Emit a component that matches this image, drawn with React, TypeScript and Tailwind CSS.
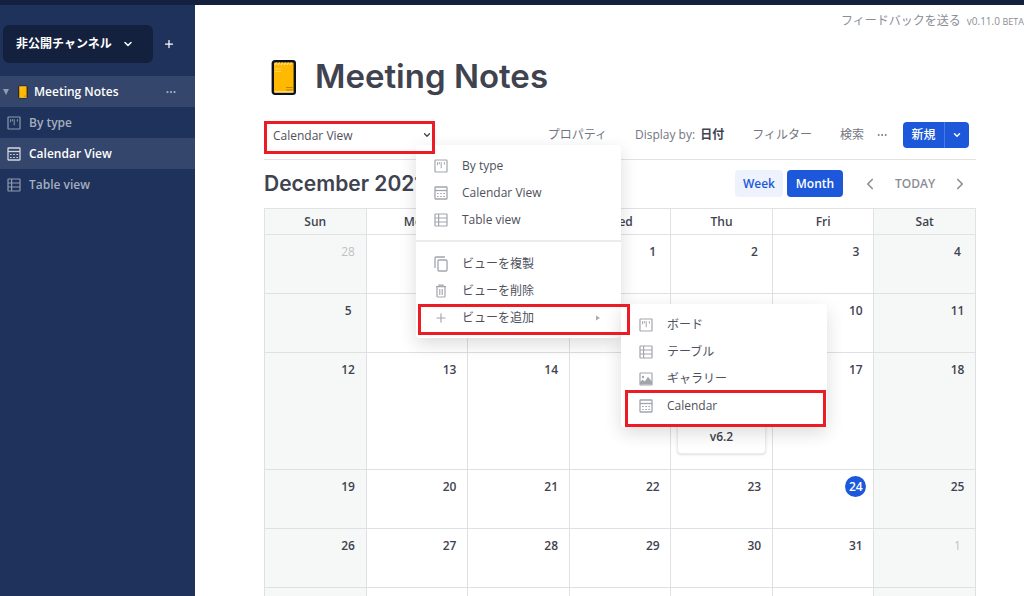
import type { ReactNode } from "react";
import { useState } from "react";
import { ChevronDown, ChevronLeft, ChevronRight, Ellipsis, Plus } from "lucide-react";

type IconProps = { className?: string };

function BoardIcon({ className = "" }: IconProps) {
  return (
    <svg viewBox="0 0 14 14" className={`size-3.5 shrink-0 ${className}`} fill="none" stroke="currentColor" aria-hidden>
      <rect x="1" y="1" width="12" height="12" rx="0.5" strokeWidth="1.2" />
      <path d="M3.6 3.2v3M5.4 3.2v2M7.2 3.2v6M10.4 3.2v2.4" strokeWidth="1" />
    </svg>
  );
}

function CalendarIcon({ className = "" }: IconProps) {
  return (
    <svg viewBox="0 0 14 14" className={`size-3.5 shrink-0 ${className}`} fill="none" stroke="currentColor" aria-hidden>
      <rect x="1" y="1" width="12" height="12" rx="0.5" strokeWidth="1.3" />
      <path d="M1 4.5h12" strokeWidth="1.3" />
      <path d="M3 7.5h1.6M6.2 7.5h1.6M9.4 7.5H11M3 10.5h1.6M6.2 10.5h1.6M9.4 10.5H11" strokeWidth="1.2" />
    </svg>
  );
}

function TableIcon({ className = "" }: IconProps) {
  return (
    <svg viewBox="0 0 14 14" className={`size-3.5 shrink-0 ${className}`} fill="none" stroke="currentColor" aria-hidden>
      <rect x="1" y="1" width="12" height="12" rx="0.5" strokeWidth="1.2" />
      <path d="M1 5h12M1 9h12M4.6 1v12" strokeWidth="1.2" />
    </svg>
  );
}

function GalleryIcon({ className = "" }: IconProps) {
  return (
    <svg viewBox="0 0 14 14" className={`size-3.5 shrink-0 ${className}`} fill="none" stroke="currentColor" aria-hidden>
      <rect x="1" y="1" width="12" height="12" rx="0.5" strokeWidth="1.2" />
      <circle cx="4" cy="5" r="1.2" fill="currentColor" stroke="none" />
      <path d="M1 12.5V10l2.6-2.2L5.8 9.4 9 4.8l4 5v2.7z" fill="currentColor" stroke="none" />
    </svg>
  );
}

function DuplicateIcon({ className = "" }: IconProps) {
  return (
    <svg viewBox="0 0 14 16" className={`h-4 w-3.5 shrink-0 ${className}`} fill="none" stroke="currentColor" aria-hidden>
      <rect x="4" y="4" width="9" height="11" rx="1" strokeWidth="1.3" />
      <path d="M1 12V2a1 1 0 0 1 1-1h9" strokeWidth="1.3" />
    </svg>
  );
}

function TrashIcon({ className = "" }: IconProps) {
  return (
    <svg viewBox="0 0 14 14" className={`size-3.5 shrink-0 ${className}`} fill="none" stroke="currentColor" aria-hidden>
      <path d="M2 2.7h10M5 2.5V1.1h4v1.4M3 3v9.2a.8.8 0 0 0 .8.8h6.4a.8.8 0 0 0 .8-.8V3" strokeWidth="1.2" />
      <path d="M5.8 5v6M8.2 5v6" strokeWidth="1.1" />
    </svg>
  );
}

function NotebookIcon({ className = "" }: IconProps) {
  return (
    <svg viewBox="0 0 26 37" className={`shrink-0 ${className}`} aria-hidden>
      <rect x="1.8" y="2.3" width="22" height="32.5" rx="2" fill="#ffb900" stroke="#10121a" strokeWidth="2.4" />
      <path d="M3.5 33h19" stroke="#fff0c0" strokeWidth="1.2" />
      <path
        d="M4 6l1.5-2.5M7 6l1.5-2.5M10 6l1.5-2.5M13 6l1.5-2.5M16 6l1.5-2.5M19 6l1.5-2.5"
        stroke="#f5e6b0"
        strokeWidth="1.2"
      />
      <path d="M4 10h6M4 12.5h6" stroke="#ffd05a" strokeWidth="1" />
      <path d="M15 28.5h6.5M15 31h6.5" stroke="#b98200" strokeWidth="1" />
    </svg>
  );
}

const VIEWS = [
  { label: "By type", icon: <BoardIcon /> },
  { label: "Calendar View", icon: <CalendarIcon /> },
  { label: "Table view", icon: <TableIcon /> },
];

const NEW_VIEWS = [
  { label: "ボード", icon: <BoardIcon /> },
  { label: "テーブル", icon: <TableIcon /> },
  { label: "ギャラリー", icon: <GalleryIcon /> },
  { label: "Calendar", icon: <CalendarIcon /> },
];

const WEEKDAYS = ["Sun", "Mon", "Tue", "Wed", "Thu", "Fri", "Sat"];

const WEEKS = [
  { height: "h-[59px]", days: [28, 29, 30, 1, 2, 3, 4] },
  { height: "h-[59px]", days: [5, 6, 7, 8, 9, 10, 11] },
  { height: "h-[117px]", days: [12, 13, 14, 15, 16, 17, 18] },
  { height: "h-[59px]", days: [19, 20, 21, 22, 23, 24, 25] },
  { height: "h-[59px]", days: [26, 27, 28, 29, 30, 31, 1] },
];

function MenuItem({ icon, label, children }: { icon: ReactNode; label: string; children?: ReactNode }) {
  return (
    <button
      type="button"
      role="menuitem"
      className="flex h-[27px] w-full items-center pr-5 pl-[18px] text-left hover:bg-gray-100"
    >
      <span className="flex w-7 items-center text-[#a3a5ac] [&>svg]:mr-auto">{icon}</span>
      <span className="flex-1">{label}</span>
      {children}
    </button>
  );
}

function Highlight({ className }: { className: string }) {
  return <div className={`pointer-events-none absolute border-3 border-[#ec1c24] ${className}`} aria-hidden />;
}

function ViewMenu() {
  return (
    <div
      role="menu"
      className="absolute top-6 left-[152px] z-10 w-[205px] rounded-sm bg-white py-[7px] text-[#4e515c] shadow-[0_6px_18px_rgba(0,0,0,0.14)]"
    >
      {VIEWS.map((view) => (
        <MenuItem key={view.label} {...view} />
      ))}
      <hr className="mt-[7px] mb-2 border-t-2 border-[#ebebed]" />
      <MenuItem icon={<DuplicateIcon />} label="ビューを複製" />
      <MenuItem icon={<TrashIcon />} label="ビューを削除" />
      <div className="relative">
        <MenuItem icon={<Plus className="size-3.5" strokeWidth={2} />} label="ビューを追加">
          <svg viewBox="0 0 6 6" className="size-1.5 text-[#a9abb1]" aria-hidden>
            <path d="M1 0.5L5 3L1 5.5z" fill="currentColor" />
          </svg>
        </MenuItem>
        <div
          role="menu"
          className="absolute top-0 left-full w-[206px] rounded-sm bg-white pt-[7px] pb-2 shadow-[0_6px_18px_rgba(0,0,0,0.14)]"
        >
          {NEW_VIEWS.map((view) => (
            <MenuItem key={view.label} {...view} />
          ))}
          <Highlight className="right-px bottom-0 left-1 h-[37px]" />
        </div>
        <Highlight className="top-0 -right-[9px] left-0.5 h-[31px]" />
      </div>
    </div>
  );
}

function Sidebar() {
  return (
    <aside className="w-[195px] shrink-0 bg-[#1e325c] text-[12px] font-semibold text-[#a5adbe]">
      <div className="flex items-center pt-5 pl-[3px]">
        <button
          type="button"
          className="flex h-[38px] w-[150px] items-center rounded-md bg-[#14213e] pl-[13px] font-bold text-white"
        >
          非公開チャンネル
          <ChevronDown className="ml-2.5 size-3" strokeWidth={3} />
        </button>
        <button type="button" aria-label="Add board" className="ml-2.5 text-white">
          <Plus className="size-3" strokeWidth={2.5} />
        </button>
      </div>

      <nav className="mt-[13px]">
        <div className="flex h-[31px] items-center bg-[#35466c] pr-[18px] pl-[3px] text-white">
          <svg viewBox="0 0 6 6" className="size-1.5 text-[#929caf]" aria-hidden>
            <path d="M0 0h6L3 6z" fill="currentColor" />
          </svg>
          <NotebookIcon className="mr-1.5 ml-[9px] h-3.5 w-2.5" />
          <a href="#board" className="flex-1">Meeting Notes</a>
          <button type="button" aria-label="Board options" className="text-[#a5adbe]">
            <Ellipsis className="size-3" strokeWidth={2.5} />
          </button>
        </div>
        {VIEWS.map((view) => (
          <a
            key={view.label}
            href="#view"
            className={`flex h-[31px] items-center gap-2 pl-[7px] ${
              view.label === "Calendar View" ? "bg-[#35466c] text-white" : ""
            }`}
          >
            <span className={view.label === "Calendar View" ? "text-[#d2d6de]" : "text-[#8e99ae]"}>{view.icon}</span>
            {view.label}
          </a>
        ))}
      </nav>
    </aside>
  );
}

function Toolbar() {
  const [title, setTitle] = useState("Calendar View");

  return (
    <div className="flex h-[39px] items-start border-b border-[#e2e2e4] text-[#73767f]">
      <div className="relative">
        <div className="flex w-[171px] items-center px-[3px] pt-[3px]">
          <input
            aria-label="View title"
            value={title}
            onChange={(e) => setTitle(e.target.value)}
            className="h-[22px] min-w-0 flex-1 pl-1.5 text-[#4e515c] outline-none"
          />
          <button type="button" aria-label="View menu" className="text-[#3f4350]">
            <ChevronDown className="size-2.5" strokeWidth={3} />
          </button>
        </div>
        <ViewMenu />
        <Highlight className="top-0 left-0 z-20 h-[33px] w-[171px]" />
      </div>

      <div className="mt-px mr-[7px] ml-auto flex h-[26px] items-center">
        <button type="button">プロパティ</button>
        <button type="button" className="ml-7">
          Display by: <span className="ml-0.5 font-bold text-[#3f4350]">日付</span>
        </button>
        <button type="button" className="ml-7">フィルター</button>
        <button type="button" className="ml-7">検索</button>
        <button type="button" aria-label="More options" className="ml-3">
          <Ellipsis className="size-3" strokeWidth={2} />
        </button>
        <div className="ml-[15px] flex h-[26px] items-center rounded-sm bg-[#1c58d9] text-white">
          <button type="button" className="h-full w-[41px] font-medium">新規</button>
          <button
            type="button"
            aria-label="New from template"
            className="flex h-full w-[25px] items-center justify-center border-l border-[#4a7ae1]"
          >
            <ChevronDown className="size-2.5" strokeWidth={3.5} />
          </button>
        </div>
      </div>
    </div>
  );
}

function Calendar() {
  return (
    <section>
      <div className="mt-2.5 flex h-[27px] items-center font-semibold">
        <h2 className="font-[Inter,sans-serif] text-[21px] leading-6 text-[#3f4350]">December 2021</h2>
        <button type="button" className="ml-auto h-[27px] w-12 rounded-sm bg-[#edf2fc] text-[#1c58d9]">Week</button>
        <button type="button" className="ml-1 h-[27px] w-14 rounded-sm bg-[#1c58d9] text-white">Month</button>
        <div className="mr-[7px] ml-[18px] flex items-center gap-4 text-[#8b8d95]">
          <button type="button" aria-label="Previous">
            <ChevronLeft className="size-[18px]" strokeWidth={2.2} />
          </button>
          <button type="button">TODAY</button>
          <button type="button" aria-label="Next">
            <ChevronRight className="size-[18px]" strokeWidth={2.2} />
          </button>
        </div>
      </div>

      <table className="mt-[11px] w-full table-fixed border-collapse font-semibold text-[#3f4350]">
        <thead>
          <tr className="h-[26px]">
            {WEEKDAYS.map((day) => (
              <th
                key={day}
                scope="col"
                className="border border-[#e2e2e4] p-0 font-semibold first:bg-[#f6f8f8] last:bg-[#f6f8f8]"
              >
                {day}
              </th>
            ))}
          </tr>
        </thead>
        <tbody>
          {WEEKS.map((week, row) => (
            <tr key={row} className={week.height}>
              {week.days.map((day, col) => {
                const outside = (row === 0 && day > 7) || (row === 4 && day < 20);
                const today = row === 3 && day === 24;
                return (
                  <td
                    key={col}
                    className="border border-[#dfe0e2] p-0 align-top first:bg-[#f6f8f8] last:bg-[#f6f8f8]"
                  >
                    <div
                      className={`mt-1.5 mr-[7px] ml-auto flex size-[21px] items-center justify-center rounded-full ${
                        today ? "bg-[#1c58d9] text-white" : outside ? "font-normal text-[#bfc1c5]" : ""
                      }`}
                    >
                      {day}
                    </div>
                    {row === 2 && day === 16 && (
                      <div className="mx-1.5 mt-1 flex h-[70px] items-end justify-center rounded-sm border border-[#ececee] bg-white pb-2 shadow-sm">
                        v6.2
                      </div>
                    )}
                  </td>
                );
              })}
            </tr>
          ))}
          <tr className="h-[59px]">
            {WEEKDAYS.map((day) => (
              <td key={day} className="border border-[#dfe0e2] p-0 first:bg-[#f6f8f8] last:bg-[#f6f8f8]" />
            ))}
          </tr>
        </tbody>
      </table>
    </section>
  );
}

export default function App() {
  return (
    <div className="flex h-screen flex-col overflow-hidden bg-white font-['Open_Sans','Noto_Sans_CJK_JP',sans-serif] text-[12px] leading-4">
      <div className="h-[5px] shrink-0 bg-[#14213e]" />
      <div className="flex min-h-0 flex-1">
        <Sidebar />
        <main className="min-w-0 flex-1">
          <div className="flex h-8 items-center justify-end gap-1.5 text-[#8b8d95]">
            <a href="#feedback">フィードバックを送る</a>
            <span className="text-[10px]">
              v0.11.0 <span className="text-[9px]">BETA</span>
            </span>
          </div>
          <div className="pr-12 pl-[69px]">
            <header className="mt-[15px] mb-[19px] flex h-[50px] items-center gap-[18px] pl-[7px]">
              <NotebookIcon className="h-[37px] w-[26px]" />
              <h1 className="pb-0.5 font-[Inter,sans-serif] text-[33px] leading-10 font-semibold text-[#3f4350]">
                Meeting Notes
              </h1>
            </header>
            <Toolbar />
            <Calendar />
          </div>
        </main>
      </div>
    </div>
  );
}
